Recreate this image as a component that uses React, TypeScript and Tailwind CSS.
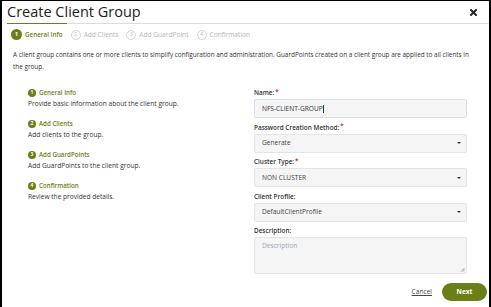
const green = "text-[#6b7f17]";

const tabs = ["General Info", "Add Clients", "Add GuardPoint", "Confirmation"];

const steps = [
  { title: "General Info", text: "Provide basic information about the client group." },
  { title: "Add Clients", text: "Add clients to the group." },
  { title: "Add GuardPoints", text: "Add GuardPoints to the client group." },
  { title: "Confirmation", text: "Review the provided details." },
];

function Caret() {
  return <span className="ml-auto mr-[5px] h-0 w-0 border-x-[2px] border-t-[2.5px] border-x-transparent border-t-[#333]" />;
}

function Label({ text, required }: { text: string; required?: boolean }) {
  return (
    <div className="mb-[2px] h-[9px] text-[6.4px] font-semibold text-[#333] leading-[9px]">
      {text}
      {required && <span className="relative -top-[1.5px] ml-[1px] text-[#e0202a]">*</span>}
    </div>
  );
}

function Select({ value }: { value: string }) {
  return (
    <div className="flex h-[19px] items-center rounded-[2px] border border-[#e4e4e4] bg-[#f5f5f5] pl-[7px] text-[6.6px] text-[#444]">
      {value}
      <Caret />
    </div>
  );
}

export default function App() {
  return (
    <div
      className="h-[307px] w-[491px] overflow-hidden border-l-2 border-r-2 border-t border-black bg-white text-[#333]"
      style={{ fontFamily: '"Open Sans", "Noto Sans", sans-serif' }}
    >
      <div className="flex h-[21px] items-center justify-between pl-[5px] pr-[12px] pt-[1px]">
        <h1 className="text-[14.5px] leading-[20px] text-[#222]">Create Client Group</h1>
        <svg width="7" height="7" viewBox="0 0 7 7" className="mt-[1px]">
          <path d="M1 1 L6 6 M6 1 L1 6" stroke="#1f2933" strokeWidth="2" strokeLinecap="square" />
        </svg>
      </div>

      <div className="ml-[5px] flex border-b border-[#dcdcdc]">
        <div className="h-[1px] w-[60px] translate-y-[1px] bg-[#6b7f17]" />
      </div>

      <div className="flex items-center gap-[8px] pl-[9px] pt-[5px]">
        {tabs.map((t, i) => (
          <div key={t} className="flex items-center gap-[3px]">
            <span
              className={
                i === 0
                  ? "flex h-[11px] w-[11px] items-center justify-center rounded-full bg-[#6b7f17] text-[6px] font-bold text-white"
                  : "flex h-[10px] w-[10px] items-center justify-center rounded-full border border-[#d4d4d4] text-[5.5px] text-[#bbb]"
              }
            >
              {i + 1}
            </span>
            <span className={i === 0 ? `${green} text-[6.3px] font-semibold` : "text-[6.6px] text-[#b5b5b5]"}>{t}</span>
          </div>
        ))}
      </div>

      <p className="pl-[11px] pr-[10px] pt-[9px] text-[6.4px] leading-[12px] text-[#333]">
        A client group contains one or more clients to simplify configuration and administration. GuardPoints created on a client group are applied to all clients in the group.
      </p>

      <div className="flex pt-[15px]">
        <div className="flex w-[252px] flex-col gap-[10px] pl-[26px]">
          {steps.map((s, i) => (
            <div key={s.title}>
              <div className="flex h-[9px] items-center gap-[3px]">
                <span className="flex h-[8px] w-[8px] items-center justify-center rounded-full bg-[#6b7f17] text-[5px] font-bold text-white">
                  {i + 1}
                </span>
                <span className={`${green} text-[6.2px] font-semibold leading-[9px]`}>{s.title}</span>
              </div>
              <div className="mt-[1px] text-[6.6px] leading-[11px] text-[#333]">{s.text}</div>
            </div>
          ))}
        </div>

        <div className="flex w-[213px] flex-col">
          <Label text="Name:" required />
          <div className="flex h-[19px] items-center rounded-[2px] border border-[#d6e0ea] bg-[#f5f5f5] pl-[7px] text-[6.6px] text-[#333]">
            NFS-CLIENT-GROUP<span className="ml-[0.5px] h-[8px] w-[0.6px] bg-[#333]" />
          </div>
          <div className="mt-[4.5px]">
            <Label text="Password Creation Method:" required />
            <Select value="Generate" />
          </div>
          <div className="mt-[4.5px]">
            <Label text="Cluster Type:" required />
            <Select value="NON CLUSTER" />
          </div>
          <div className="mt-[4.5px]">
            <Label text="Client Profile:" />
            <Select value="DefaultClientProfile" />
          </div>
          <div className="mt-[4.5px]">
            <Label text="Description:" />
            <div className="relative h-[37px] rounded-[2px] border border-[#e4e4e4] bg-[#f5f5f5] pl-[7px] pt-[3px] text-[6.6px] text-[#9aa7b8]">
              Description
              <svg width="5" height="5" viewBox="0 0 5 5" className="absolute bottom-[1px] right-[1px]">
                <path d="M4.5 1 L1 4.5 M4.5 3 L3 4.5" stroke="#777" strokeWidth="0.7" />
              </svg>
            </div>
          </div>
        </div>
      </div>

      <div className="flex items-center justify-end gap-[10px] pr-[2px] pt-[9px]">
        <span className="text-[6.6px] text-[#444] underline">Cancel</span>
        <button className="h-[18px] w-[45px] rounded-full bg-[#6b7f17] text-[6.6px] font-bold text-white">Next</button>
      </div>
    </div>
  );
}
